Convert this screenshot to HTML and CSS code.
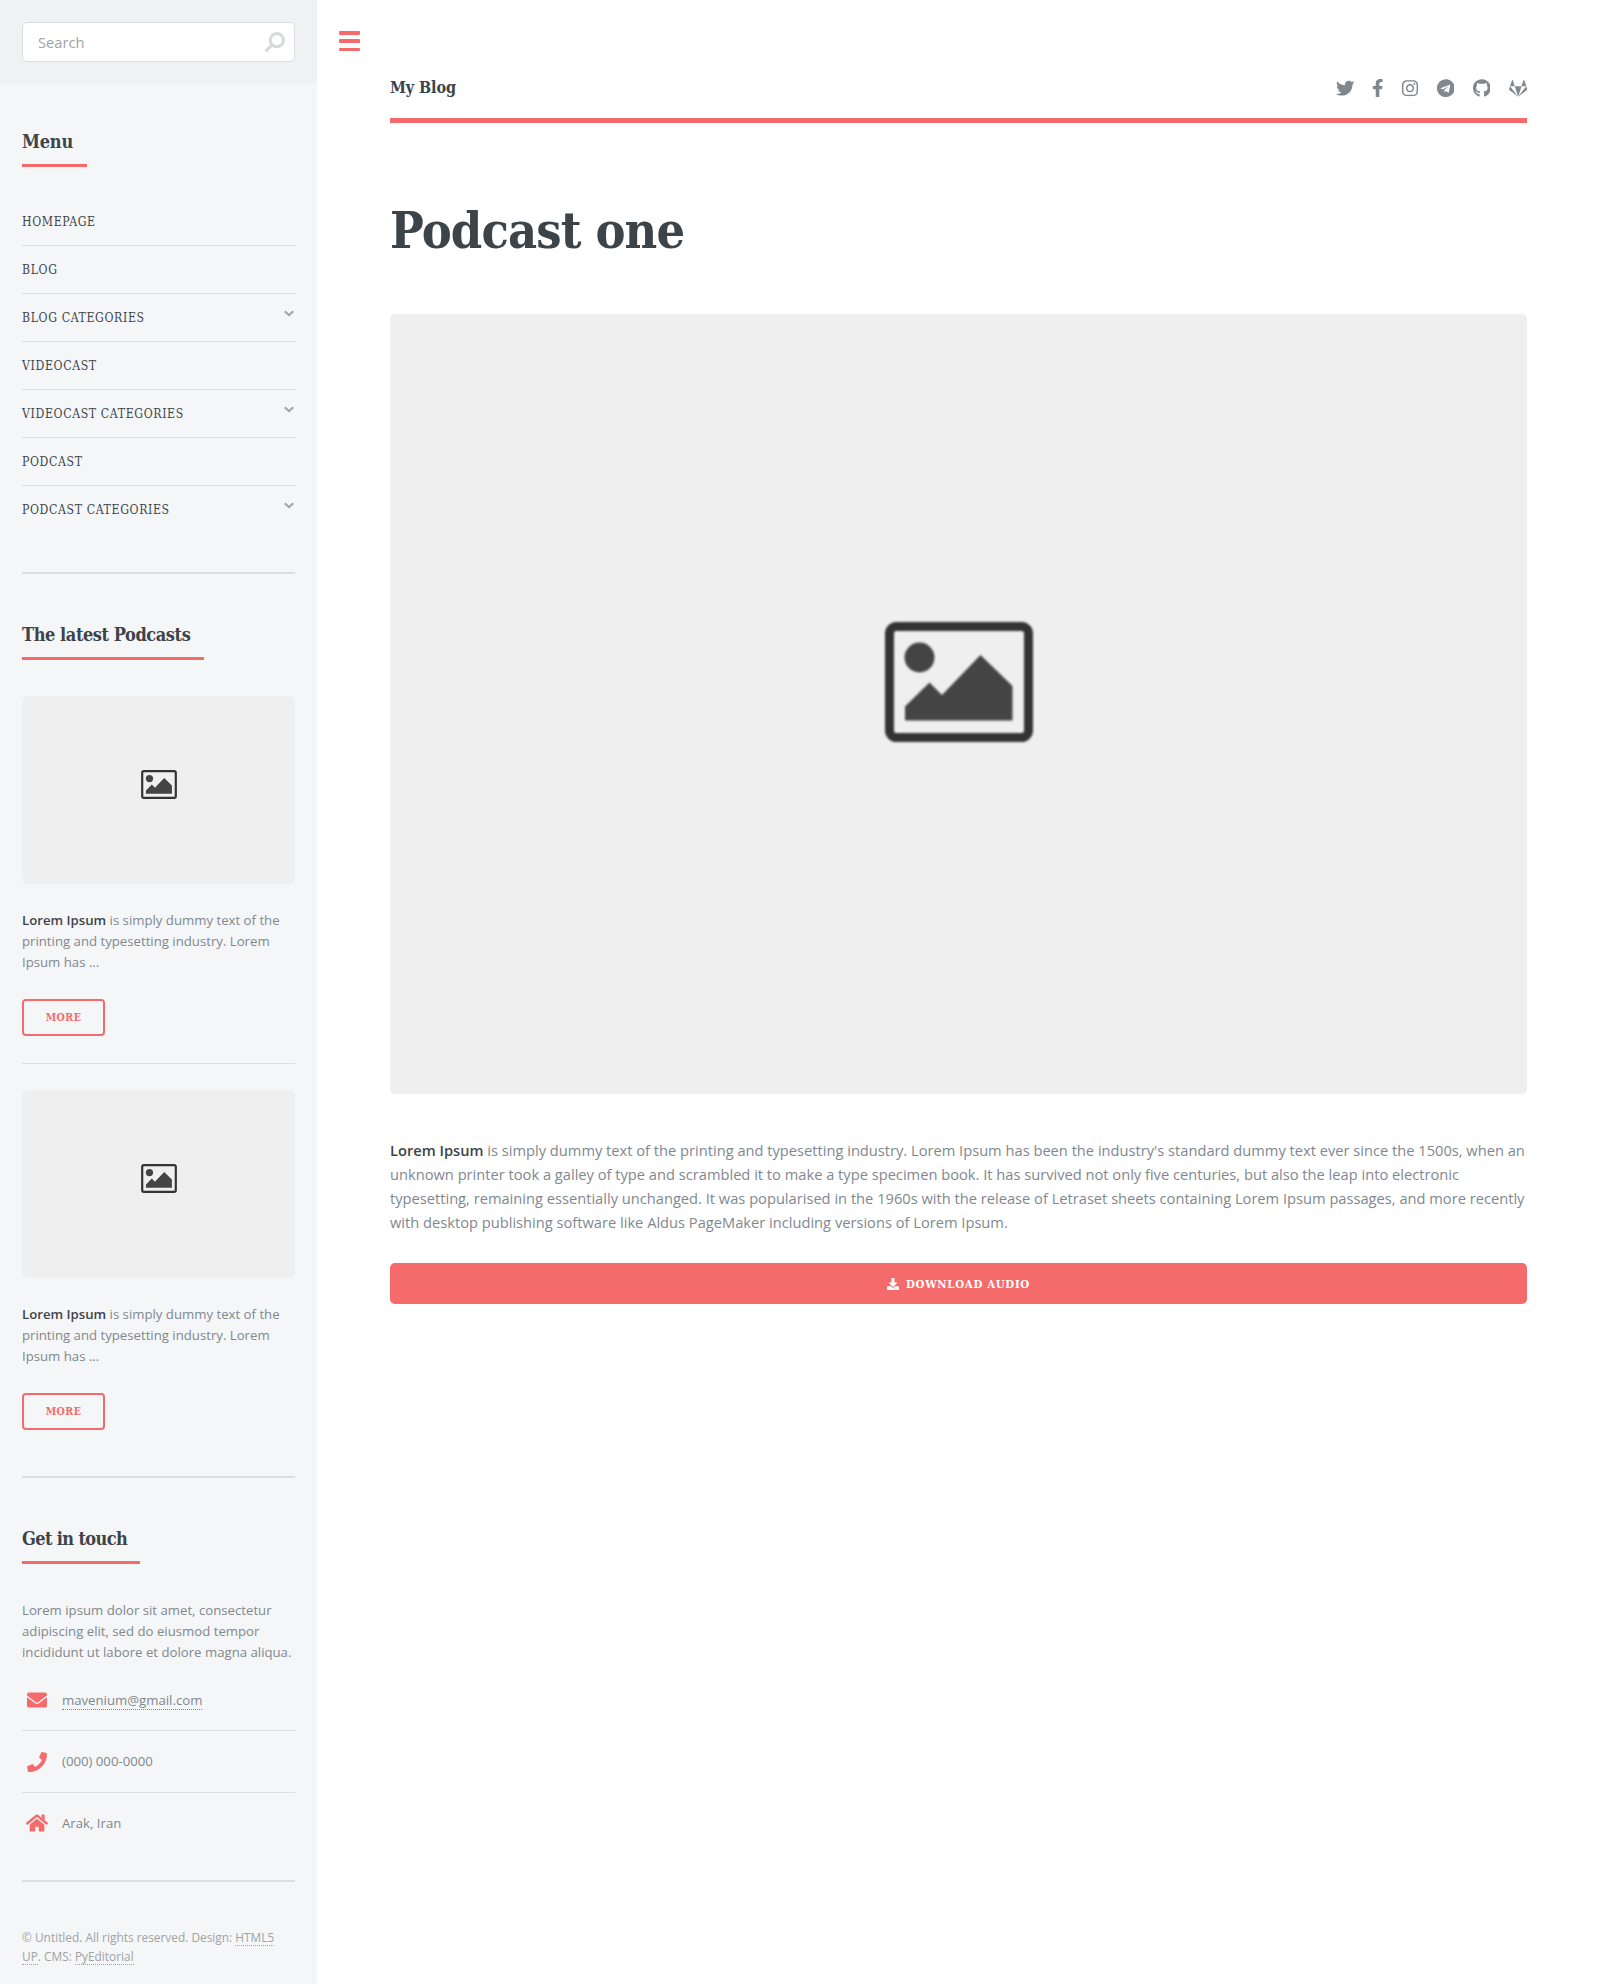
FILE: index.html
```html
<!DOCTYPE html>
<html lang="en">
<head>
<meta charset="utf-8">
<title>Podcast one</title>
<link rel="stylesheet" href="styles.css">
</head>
<body>
<svg class="defs" aria-hidden="true">
  <symbol id="picture" viewBox="0 0 148 120">
    <rect x="4.5" y="4.5" width="139" height="111" rx="7" fill="none" stroke="#333" stroke-width="9"/>
    <circle cx="34.500" cy="35.500" r="15" fill="#444"/>
    <path d="M20 84.500L44.500 60.500L57 73L95.500 33L127.500 64V98.500H20z" fill="#444"/>
  </symbol>
  <symbol id="chevron" viewBox="0 0 10 7"><path d="M.8 1.200L5 5.200L9.200 1.200" fill="none" stroke="currentColor" stroke-width="2"/></symbol>
</svg>
<div class="wrapper">
  <aside class="sidebar">
    <form class="search">
      <label class="search-field"><input type="text" placeholder="Search">
        <svg class="search-icon" viewBox="0 0 20 20"><circle cx="11.800" cy="8.200" r="6.600"/><path d="M7.200 12.800L1.600 18.400"/></svg>
      </label>
    </form>
    <nav class="menu">
      <h2 class="title title-menu">Menu</h2>
      <ul class="menu-list">
        <li>Homepage</li>
        <li>Blog</li>
        <li>Blog Categories<svg class="chevron"><use href="#chevron"/></svg></li>
        <li>Videocast</li>
        <li>Videocast Categories<svg class="chevron"><use href="#chevron"/></svg></li>
        <li>Podcast</li>
        <li>Podcast Categories<svg class="chevron"><use href="#chevron"/></svg></li>
      </ul>
    </nav>
    <section class="latest">
      <h2 class="title title-latest">The latest Podcasts</h2>
      <article class="mini">
        <div class="thumb"><svg class="thumb-icon"><use href="#picture"/></svg></div>
        <p><strong>Lorem Ipsum</strong> is simply dummy text of the printing and typesetting industry. Lorem Ipsum has ...</p>
        <a class="button">More</a>
      </article>
      <article class="mini">
        <div class="thumb"><svg class="thumb-icon"><use href="#picture"/></svg></div>
        <p><strong>Lorem Ipsum</strong> is simply dummy text of the printing and typesetting industry. Lorem Ipsum has ...</p>
        <a class="button">More</a>
      </article>
    </section>
    <section class="touch">
      <h2 class="title title-touch">Get in touch</h2>
      <p>Lorem ipsum dolor sit amet, consectetur adipiscing elit, sed do eiusmod tempor incididunt ut labore et dolore magna aliqua.</p>
      <ul class="contact">
        <li><svg viewBox="0 0 512 512"><path d="M502.300 190.800c3.900-3.100 9.700-.2 9.700 4.700V400c0 26.500-21.500 48-48 48H48c-26.500 0-48-21.500-48-48V195.600c0-5 5.700-7.800 9.700-4.700 22.400 17.400 52.100 39.500 154.100 113.600 21.100 15.400 56.700 47.800 92.200 47.600 35.700.3 72-32.800 92.300-47.600 102-74.100 131.600-96.300 154-113.700zM256 320c23.200.4 56.600-29.200 73.400-41.400 132.700-96.300 142.800-104.700 173.400-128.700 5.800-4.500 9.200-11.500 9.200-18.900v-19c0-26.500-21.500-48-48-48H48c-26.500 0-48 21.500-48 48v19c0 7.400 3.400 14.300 9.200 18.900 30.600 23.900 40.700 32.400 173.400 128.700 16.800 12.200 50.200 41.800 73.400 41.400z"/></svg><span><a class="link">mavenium@gmail.com</a></span></li>
        <li><svg viewBox="0 0 512 512"><path d="M493.400 24.600l-104-24c-11.300-2.600-22.900 3.300-27.500 13.900l-48 112c-4.200 9.800-1.400 21.300 6.900 28l60.600 49.600c-36 76.700-98.900 140.500-177.200 177.200l-49.600-60.600c-6.800-8.300-18.200-11.100-28-6.900l-112 48C3.900 366.500-2 378.100.6 389.400l24 104C27.100 504.200 36.700 512 48 512c256.100 0 464-207.500 464-464 0-11.200-7.700-20.900-18.600-23.400z"/></svg><span>(000) 000-0000</span></li>
        <li><svg class="wide" viewBox="0 0 576 512"><path d="M280.370 148.260L96 300.110V464a16 16 0 0 0 16 16l112.060-.29a16 16 0 0 0 15.920-16V368a16 16 0 0 1 16-16h64a16 16 0 0 1 16 16v95.640a16 16 0 0 0 16 16.050L464 480a16 16 0 0 0 16-16V300L295.670 148.260a12.190 12.190 0 0 0-15.300 0zM571.600 251.470L488 182.560V44.050a12 12 0 0 0-12-12h-56a12 12 0 0 0-12 12v72.610L318.470 43a48 48 0 0 0-61 0L4.340 251.470a12 12 0 0 0-1.600 16.900l25.500 31A12 12 0 0 0 45.150 301l235.220-193.740a12.190 12.190 0 0 1 15.300 0L530.900 301a12 12 0 0 0 16.900-1.600l25.500-31a12 12 0 0 0-1.700-16.930z"/></svg><span>Arak, Iran</span></li>
      </ul>
    </section>
    <footer class="copyright">© Untitled. All rights reserved. Design: <a class="link">HTML5 UP</a>. CMS: <a class="link">PyEditorial</a></footer>
  </aside>
  <main class="main">
    <div class="toggle"><i></i><i></i><i></i></div>
    <header class="header">
      <a class="logo">My Blog</a>
      <div class="social">
        <svg class="w512" viewBox="0 0 512 512"><path d="M459.370 151.716c.325 4.548.325 9.097.325 13.645 0 138.720-105.583 298.558-298.558 298.558-59.452 0-114.680-17.219-161.137-47.106 8.447.974 16.568 1.299 25.340 1.299 49.055 0 94.213-16.568 130.274-44.832-46.132-.975-84.792-31.188-98.112-72.772 6.498.974 12.995 1.624 19.818 1.624 9.421 0 18.843-1.300 27.614-3.573-48.081-9.747-84.143-51.980-84.143-102.985v-1.299c13.969 7.797 30.214 12.670 47.431 13.319-28.264-18.843-46.781-51.005-46.781-87.391 0-19.492 5.197-37.360 14.294-52.954 51.655 63.675 129.300 105.258 216.365 109.807-1.624-7.797-2.599-15.918-2.599-24.040 0-57.828 46.782-104.934 104.934-104.934 30.213 0 57.502 12.670 76.670 33.137 23.715-4.548 46.456-13.320 66.599-25.340-7.798 24.366-24.366 44.833-46.132 57.827 21.117-2.273 41.584-8.122 60.426-16.243-14.292 20.791-32.161 39.308-52.628 54.253z"/></svg>
        <svg class="w320" viewBox="0 0 320 512"><path d="M279.140 288l14.220-92.660h-88.910v-60.130c0-25.350 12.420-50.060 52.240-50.060h40.420V6.260S260.430 0 225.360 0c-73.220 0-121.080 44.380-121.080 124.720v70.620H22.890V288h81.390v224h100.170V288z"/></svg>
        <svg class="w448" viewBox="0 0 448 512"><path d="M224.100 141c-63.600 0-114.900 51.300-114.900 114.900s51.300 114.900 114.900 114.900S339 319.500 339 255.900 287.700 141 224.100 141zm0 189.600c-41.100 0-74.700-33.500-74.700-74.700s33.500-74.700 74.700-74.700 74.700 33.500 74.700 74.700-33.600 74.700-74.700 74.700zm146.400-194.300c0 14.900-12 26.800-26.800 26.800-14.900 0-26.800-12-26.800-26.800s12-26.800 26.800-26.800 26.800 12 26.800 26.800zm76.100 27.200c-1.700-35.900-9.900-67.700-36.200-93.900-26.200-26.200-58-34.400-93.900-36.200-37-2.100-147.900-2.100-184.900 0-35.800 1.700-67.600 9.900-93.900 36.100s-34.400 58-36.200 93.900c-2.100 37-2.100 147.900 0 184.900 1.700 35.900 9.900 67.700 36.200 93.900s58 34.400 93.900 36.200c37 2.100 147.900 2.100 184.900 0 35.900-1.700 67.700-9.900 93.900-36.200 26.200-26.200 34.400-58 36.200-93.900 2.100-37 2.100-147.800 0-184.800zM398.800 388c-7.800 19.600-22.900 34.700-42.600 42.600-29.500 11.700-99.500 9-132.100 9s-102.700 2.600-132.100-9c-19.600-7.800-34.700-22.900-42.600-42.600-11.700-29.500-9-99.500-9-132.100s-2.600-102.700 9-132.100c7.800-19.600 22.900-34.700 42.600-42.600 29.500-11.700 99.500-9 132.100-9s102.700-2.600 132.100 9c19.600 7.800 34.700 22.900 42.600 42.600 11.700 29.500 9 99.500 9 132.100s2.700 102.700-9 132.100z"/></svg>
        <svg class="w496" viewBox="0 0 496 512"><path d="M248 8C111 8 0 119 0 256s111 248 248 248 248-111 248-248S385 8 248 8zm121.800 169.900l-40.700 191.800c-3 13.600-11.100 16.900-22.400 10.500l-62-45.700-29.900 28.800c-3.300 3.300-6.100 6.100-12.500 6.100l4.400-63.100 114.900-103.800c5-4.400-1.100-6.900-7.700-2.500l-142 89.400-61.200-19.100c-13.300-4.200-13.600-13.300 2.800-19.700l239.100-92.200c11.100-4 20.800 2.700 17.200 19.500z"/></svg>
        <svg class="w496" viewBox="0 0 496 512"><path d="M244.800 8C106.100 8 0 113.300 0 252c0 110.900 69.800 205.800 169.500 239.200 12.800 2.300 17.300-5.600 17.300-12.100 0-6.200-.3-40.400-.3-61.400 0 0-70 15-84.700-29.800 0 0-11.400-29.100-27.800-36.600 0 0-22.900-15.700 1.600-15.400 0 0 24.900 2 38.600 25.800 21.900 38.600 58.600 27.500 72.900 20.900 2.300-16 8.800-27.100 16-33.700-55.900-6.200-112.300-14.300-112.300-110.500 0-27.500 7.600-41.300 23.600-58.900-2.600-6.500-11.100-33.300 2.600-67.900 20.900-6.500 69 27 69 27 20-5.600 41.500-8.500 62.800-8.500s42.800 2.900 62.800 8.500c0 0 48.100-33.600 69-27 13.700 34.700 5.200 61.400 2.600 67.900 16 17.700 25.800 31.500 25.800 58.900 0 96.500-58.900 104.200-114.800 110.500 9.200 7.900 17 22.900 17 46.400 0 33.700-.3 75.400-.3 83.600 0 6.500 4.600 14.400 17.300 12.100C428.200 457.800 496 362.900 496 252 496 113.300 383.500 8 244.800 8z"/></svg>
        <svg class="w512" viewBox="0 0 512 512"><path d="M105.200 24.900c-3.100-8.900-15.700-8.900-18.900 0L29.800 199.700h132c-.1 0-56.600-174.800-56.600-174.800zM.9 287.700c-2.600 8 .3 16.900 7.100 22l247.900 184-226.200-294zm160.800-88l94.300 294 94.300-294zm349.400 88l-28.800-88-226.300 294 247.900-184c6.900-5.100 9.700-14 7.200-22zM425.700 24.900c-3.100-8.900-15.700-8.900-18.900 0l-56.600 174.800h132z"/></svg>
      </div>
    </header>
    <h1 class="headline">Podcast one</h1>
    <div class="cover"><svg class="cover-icon"><use href="#picture"/></svg></div>
    <p class="lead"><strong>Lorem Ipsum</strong> is simply dummy text of the printing and typesetting industry. Lorem Ipsum has been the industry's standard dummy text ever since the 1500s, when an unknown printer took a galley of type and scrambled it to make a type specimen book. It has survived not only five centuries, but also the leap into electronic typesetting, remaining essentially unchanged. It was popularised in the 1960s with the release of Letraset sheets containing Lorem Ipsum passages, and more recently with desktop publishing software like Aldus PageMaker including versions of Lorem Ipsum.</p>
    <a class="download"><svg viewBox="0 0 512 512"><path d="M216 0h80c13.300 0 24 10.700 24 24v168h87.700c17.800 0 26.700 21.500 14.100 34.100L269.700 378.300c-7.500 7.500-19.800 7.500-27.300 0L90.100 226.100c-12.600-12.600-3.700-34.100 14.100-34.100H192V24c0-13.300 10.700-24 24-24zm296 376v112c0 13.300-10.700 24-24 24H24c-13.300 0-24-10.700-24-24V376c0-13.300 10.700-24 24-24h146.700l49 49c20.100 20.100 52.500 20.100 72.600 0l49-49H488c13.300 0 24 10.700 24 24zm-124 88c0-11-9-20-20-20s-20 9-20 20 9 20 20 20 20-9 20-20zm64 0c0-11-9-20-20-20s-20 9-20 20 9 20 20 20 20-9 20-20z"/></svg><span>Download audio</span></a>
  </main>
</div>
</body>
</html>
```
FILE: styles.css
```css
* { box-sizing: border-box; margin: 0; padding: 0; }
body { background: #fff; color: #7f888f; font: 14.667px/24.2px "Open Sans", "Noto Sans", sans-serif; }
ul { list-style: none; }
svg { fill: currentColor; flex: none; }
strong { color: #3d4449; font-weight: 600; }
.defs { display: none; }
.wrapper { display: flex; height: 1984px; overflow: hidden; }

.sidebar { width: 317px; flex: none; background: #f5f6f7; font-size: 13.2px; line-height: 21px; }
.search { height: 84px; padding: 22px; background: #eff1f2; }
.search-field { display: flex; align-items: center; width: 273px; height: 40px; padding: 0 9px 0 15px; background: #fff; border: 1px solid #dadfe0; border-radius: 5px; }
.search-field input { flex: 1; min-width: 0; border: 0; outline: 0; background: none; font: 14.667px "Open Sans", sans-serif; }
.search-field input::placeholder { color: #9fa3a6; opacity: 1; }
.search-icon { width: 20px; height: 20px; margin-bottom: 1px; fill: none; stroke: #d6d9dc; stroke-width: 3; stroke-linecap: round; }

.title, .menu-list, .button, .logo, .headline, .download { font-family: "Roboto Slab", "DejaVu Serif Condensed", "DejaVu Serif", serif; }
.title { height: 40px; padding-top: 1px; border-bottom: 3px solid #f56a6a; color: #3d4449; font-size: 18px; line-height: 28px; font-weight: 700; letter-spacing: -.42px; white-space: nowrap; }
.title-menu { width: 65px; letter-spacing: -.2px; }
.title-latest { width: 182px; }
.title-touch { width: 118px; letter-spacing: -.62px; }
.menu { margin: 43px 22px 0; height: 447px; border-bottom: 2px solid #dadfe0; }
.menu-list { margin-top: 31px; }
.menu-list li { display: flex; justify-content: space-between; height: 48px; padding-top: 14px; border-bottom: 1px solid #dadfe0; color: #3d4449; font-size: 12.2px; line-height: 20px; letter-spacing: .62px; text-transform: uppercase; }
.menu-list li:last-child { border: 0; }
.chevron { width: 10px; height: 7px; margin: 2px 1px 0; color: #9fa3a6; }

.latest { margin: 46px 22px 0; height: 858px; border-bottom: 2px solid #dadfe0; }
.mini { margin-top: 36px; height: 368px; border-bottom: 1px solid #dadfe0; }
.mini + .mini { margin-top: 26px; border: 0; }
.thumb, .cover { display: flex; align-items: center; justify-content: center; background: #efefef; border-radius: 5px; }
.thumb { height: 188px; margin-bottom: 26px; }
.thumb-icon { width: 36px; height: 29px; margin-bottom: 11px; }
.button { display: flex; align-items: center; justify-content: center; width: 83px; height: 37px; margin-top: 26px; border: 2px solid #f56a6a; border-radius: 4px; color: #f56a6a; font-size: 10.560px; font-weight: 700; letter-spacing: .45px; text-transform: uppercase; }

.touch { margin: 46px 22px 0; height: 358px; border-bottom: 2px solid #dadfe0; }
.touch p { margin-top: 36px; }
.contact li { display: flex; align-items: center; height: 62px; border-bottom: 1px solid #dadfe0; }
.contact li:first-child { height: 68px; padding-top: 7px; }
.contact li:last-child { height: 60px; border: 0; }
.contact svg { width: 20px; height: 20px; margin: 0 15px 0 5px; color: #f56a6a; }
.contact svg.wide { width: 22px; margin: 0 14px 0 4px; }
.link { border-bottom: 1px dotted currentColor; }
.copyright { margin: 46px 22px 0; color: #9fa3a6; font-size: 11.880px; line-height: 19px; }

.main { flex: 1; padding: 31px 73px 0; }
.toggle { display: flex; flex-direction: column; justify-content: space-between; width: 21px; height: 20px; margin-left: -51px; }
.toggle i { height: 3.5px; border-radius: 1px; background: #f56a6a; }
.header { display: flex; justify-content: space-between; align-items: flex-start; height: 72px; padding-top: 24px; border-bottom: 5px solid #f56a6a; }
.logo { padding-top: 1px; color: #3d4449; font-size: 16px; font-weight: 700; letter-spacing: -.1px; }
.social { display: flex; align-items: center; gap: 18.330px; height: 26px; }
.social svg { height: 18.330px; }
.w512 { width: 18.330px; }
.w496 { width: 17.760px; }
.w448 { width: 16.040px; }
.w320 { width: 11.460px; }
.headline { height: 191px; padding-top: 74px; color: #3d4449; font-size: 50px; line-height: 68px; font-weight: 700; letter-spacing: -.85px; white-space: nowrap; }
.cover { height: 780px; }
.cover-icon { width: 148px; height: 120px; margin-bottom: 44px; filter: blur(.8px); }
.lead { margin-top: 44px; line-height: 24px; }
.download { display: flex; align-items: center; justify-content: center; gap: 7px; height: 41px; margin-top: 29px; padding-top: 1px; background: #f56a6a; border-radius: 5px; color: #fff; font-size: 11.4px; font-weight: 700; letter-spacing: .65px; text-transform: uppercase; }
.download svg { width: 12px; height: 12px; }
```
